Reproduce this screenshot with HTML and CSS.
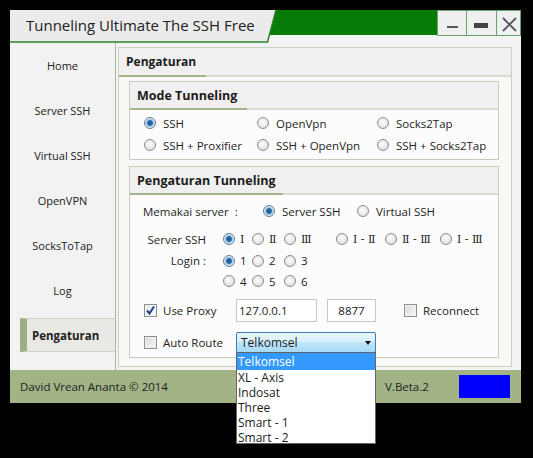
FILE: index.html
```html
<!DOCTYPE html>
<html lang="id">
<head>
  <title>Tunneling Ultimate The SSH Free</title>
  <meta charset="UTF-8"/>
  <link rel="stylesheet" href="styles.css">
</head>
<body>
<div class="window">
  <div class="titlebar">
    <svg class="title-art" width="511" height="33" viewBox="0 0 511 33">
      <polygon points="0,0 266,0 257.5,32 0,32" fill="#ebebeb"/>
      <polygon points="266,0 427,0 427,25 259.4,25" fill="#067c06"/>
      <polyline points="0,32 257.5,32 266,0" fill="none" stroke="#2a832a" stroke-width="1.5"/>
      <rect x="427.5" y="0.5" width="29" height="25" fill="#efefef" stroke="#6aa36a"/>
      <rect x="456.5" y="0.5" width="30" height="25" fill="#efefef" stroke="#6aa36a"/>
      <rect x="486.5" y="0.5" width="24" height="25" fill="#efefef" stroke="#6aa36a"/>
      <rect x="437" y="16" width="11" height="2" fill="#555"/>
      <rect x="464" y="13" width="14" height="5" fill="#444"/>
      <path d="M493 8 L506 21 M506 8 L493 21" stroke="#555" stroke-width="1.8" fill="none"/>
    </svg>
    <span class="title-text">Tunneling Ultimate The SSH Free</span>
  </div>

  <div class="main">
    <nav class="sidebar">
      <div class="nav-item">Home</div>
      <div class="nav-item">Server SSH</div>
      <div class="nav-item">Virtual SSH</div>
      <div class="nav-item">OpenVPN</div>
      <div class="nav-item">SocksToTap</div>
      <div class="nav-item">Log</div>
      <div class="nav-item active">Pengaturan</div>
    </nav>

    <div class="content">
      <div class="panel">
        <div class="panel-head"><span class="panel-title">Pengaturan</span></div>

        <div class="group">
          <div class="group-head"><span class="group-title mode-title">Mode Tunneling</span></div>
          <div class="mode-grid">
            <label class="opt"><span class="radio checked"></span>SSH</label>
            <label class="opt"><span class="radio"></span>OpenVpn</label>
            <label class="opt"><span class="radio"></span>Socks2Tap</label>
            <label class="opt"><span class="radio"></span>SSH + Proxifier</label>
            <label class="opt"><span class="radio"></span>SSH + OpenVpn</label>
            <label class="opt"><span class="radio"></span>SSH + Socks2Tap</label>
          </div>
        </div>

        <div class="group tunnel">
          <div class="group-head"><span class="group-title tunnel-title">Pengaturan Tunneling</span></div>
          <div class="tunnel-body">
            <div class="row row-server">
              <span class="server-label">Memakai server&nbsp; :</span>
              <label class="opt server-opt"><span class="radio checked"></span>Server SSH</label>
              <label class="opt"><span class="radio"></span>Virtual SSH</label>
            </div>

            <div class="row num-row">
              <span class="num-label">Server SSH</span>
              <div class="num-grid">
                <label class="num"><span class="radio checked"></span><span class="rn">Ⅰ</span></label>
                <label class="num"><span class="radio"></span><span class="rn">Ⅱ</span></label>
                <label class="num"><span class="radio"></span><span class="rn">Ⅲ</span></label>
                <label class="num"><span class="radio"></span><span class="rn">Ⅰ - Ⅱ</span></label>
                <label class="num"><span class="radio"></span><span class="rn">Ⅱ - Ⅲ</span></label>
                <label class="num"><span class="radio"></span><span class="rn">Ⅰ - Ⅲ</span></label>
              </div>
            </div>

            <div class="row num-row login">
              <span class="num-label">Login :</span>
              <div class="num-grid">
                <label class="num"><span class="radio checked"></span>1</label>
                <label class="num"><span class="radio"></span>2</label>
                <label class="num"><span class="radio"></span>3</label>
              </div>
            </div>

            <div class="row num-row login-2">
              <span class="num-label"></span>
              <div class="num-grid">
                <label class="num"><span class="radio"></span>4</label>
                <label class="num"><span class="radio"></span>5</label>
                <label class="num"><span class="radio"></span>6</label>
              </div>
            </div>

            <div class="row proxy-row">
              <label class="check-label"><span class="check checked">
                <svg width="11" height="11" viewBox="0 0 11 11"><path d="M2 5.5 L4.5 8.5 L9 1.5" fill="none" stroke="#23418c" stroke-width="2"/></svg>
              </span>Use Proxy</label>
              <input class="field ip" type="text" value="127.0.0.1">
              <input class="field port" type="text" value="8877">
              <label class="check-label reconnect"><span class="check"></span>Reconnect</label>
            </div>

            <div class="row route-row">
              <label class="check-label"><span class="check"></span>Auto Route</label>
              <div class="select">
                <span>Telkomsel</span>
                <span class="arrow"></span>
                <ul class="dropdown">
                  <li class="selected">Telkomsel</li>
                  <li>XL - Axis</li>
                  <li>Indosat</li>
                  <li>Three</li>
                  <li>Smart - 1</li>
                  <li>Smart - 2</li>
                </ul>
              </div>
            </div>
          </div>
        </div>
      </div>
    </div>
  </div>

  <div class="footer">
    <span class="author">David Vrean Ananta © 2014</span>
    <span class="version">V.Beta.2</span>
    <span class="status"></span>
  </div>
</div>
</body>
</html>
```

FILE: styles.css
```css
html {
  background: #000;
}

body {
  margin: 0;
  min-height: 458px;
  box-sizing: border-box;
  padding: 10px 12px 0 10px;
  background: #000;
  font-family: "Open Sans", "Noto Sans", sans-serif;
  font-size: 11.5px;
  color: #1c1c1c;
}

.window {
  width: 511px;
  height: 393px;
  background: #f3f3f3;
  display: grid;
  grid-template-rows: 33px 1fr 33px;
}

/* title bar */
.titlebar {
  display: grid;
}

.titlebar > * {
  grid-area: 1 / 1;
}

.title-text {
  font-size: 15px;
  line-height: 33px;
  padding-left: 16px;
  margin-top: -1px;
  color: #222;
}

.main {
  display: flex;
  min-height: 0;
}

/* sidebar */
.sidebar {
  width: 105px;
  border-right: 1px solid #a9b79c;
  background: #f2f2f2;
  display: flex;
  flex-direction: column;
  font-size: 11px;
}

.nav-item {
  height: 45px;
  flex-shrink: 0;
  display: flex;
  align-items: center;
  justify-content: center;
  color: #222;
}

.nav-item.active {
  box-sizing: border-box;
  height: 34px;
  margin: 5px 0 6px 10px;
  padding-left: 5px;
  justify-content: flex-start;
  border-left: 7px solid #9cae84;
  border-top: 1px solid #cfd2c8;
  border-bottom: 1px solid #cfd2c8;
  background: #e8e8e5;
  font-weight: bold;
  font-size: 11.5px;
}

/* content panel */
.content {
  flex: 1;
  display: flex;
  padding: 4px 9px 3px 2px;
}

.panel {
  flex: 1;
  border: 1px solid #c9cfc1;
  background: #f8f8f6;
  display: flex;
  flex-direction: column;
}

.panel-head {
  height: 27px;
  display: flex;
  background: #f0f0f0;
  border-bottom: 2px solid #d9dcd3;
}

.panel-title {
  width: 80px;
  padding-left: 7px;
  margin-bottom: -2px;
  display: flex;
  align-items: center;
  font-weight: bold;
  font-size: 12px;
  border-bottom: 2px solid #a3b38b;
}

.group {
  margin: 4px 12px 0 10px;
  border: 1px solid #c7ccbf;
  background: #fcfcfc;
}

.group.tunnel {
  margin-top: 6px;
}

.group-head {
  height: 26px;
  display: flex;
  background: #f0f0f0;
  border-bottom: 2px solid #d9dcd3;
}

.group-title {
  padding-left: 7px;
  margin-bottom: -2px;
  display: flex;
  align-items: center;
  font-weight: bold;
  font-size: 12.5px;
  border-bottom: 2px solid #a3b38b;
}

.mode-title {
  width: 110px;
}

.tunnel-title {
  width: 146px;
}

/* radios and checkboxes */
.radio {
  box-sizing: border-box;
  width: 12px;
  height: 12px;
  flex-shrink: 0;
  border: 1px solid #8c8c8c;
  border-radius: 50%;
  background: radial-gradient(circle at 45% 40%, #fdfdfd, #d6d6d6);
}

.radio.checked {
  border-color: #5c7e9c;
  background: radial-gradient(circle, #174d86 0, #2e74b0 2.5px, #a9c8e2 3.5px, #e9eef2 5px);
}

.check {
  box-sizing: border-box;
  width: 13px;
  height: 13px;
  flex-shrink: 0;
  border: 1px solid #8e8f8f;
  background: linear-gradient(135deg, #d8d8d8, #f8f8f8);
  box-shadow: inset 0 0 0 1px #f4f4f4;
  display: flex;
  align-items: center;
  justify-content: center;
}

.check.checked {
  background: linear-gradient(135deg, #e4e4e4, #fbfbfb);
}

.opt {
  display: flex;
  align-items: center;
  gap: 7px;
}

/* mode tunneling */
.mode-grid {
  display: grid;
  grid-template-columns: 113px 120px auto;
  grid-auto-rows: 22px;
  padding: 2px 0 3px 14px;
}

/* pengaturan tunneling */
.tunnel-body {
  padding: 5px 0 4px 13px;
  display: flex;
  flex-direction: column;
}

.row {
  display: flex;
  align-items: center;
}

.row-server {
  height: 22px;
}

.server-label {
  width: 120px;
}

.server-opt {
  width: 94px;
}

.num-row {
  height: 22px;
  margin-top: 6px;
}

.num-row.login {
  height: 21px;
  margin-top: 0;
}

.num-row.login-2 {
  height: 20px;
  margin-top: 0;
}

.num-label {
  width: 63px;
  margin-right: 17px;
  text-align: right;
}

.num-grid {
  display: grid;
  grid-template-columns: 29px 32px 52px 49px 55px auto;
}

.num {
  display: flex;
  align-items: center;
  gap: 5px;
}

.rn {
  font-family: "DejaVu Serif", "Liberation Serif", serif;
  font-size: 11px;
}

.proxy-row {
  height: 23px;
  margin-top: 8px;
}

.route-row {
  height: 21px;
  margin-top: 10px;
}

.check-label {
  width: 93px;
  padding-left: 1px;
  box-sizing: border-box;
  display: flex;
  align-items: center;
  gap: 6px;
}

.field {
  box-sizing: border-box;
  height: 23px;
  margin: 0;
  border: 1px solid #c3c6cb;
  background: #fff;
  font: inherit;
  color: #1c1c1c;
  padding: 0 2px;
}

.ip {
  width: 81px;
}

.port {
  width: 49px;
  margin-left: 10px;
  text-align: center;
}

.reconnect {
  margin-left: 27px;
}

.select {
  position: relative;
  box-sizing: border-box;
  width: 140px;
  height: 21px;
  padding-left: 4px;
  display: flex;
  align-items: center;
  border: 1px solid #3c7fb1;
  border-radius: 2px;
  background: linear-gradient(#eaf6fd, #d9f0fc 45%, #bee6fd 50%, #a7d9f5);
  font-size: 12px;
}

.arrow {
  margin-left: auto;
  margin-right: 4px;
  border-left: 3.5px solid transparent;
  border-right: 3.5px solid transparent;
  border-top: 4px solid #111;
}

.dropdown {
  position: absolute;
  top: 100%;
  left: -1px;
  width: 140px;
  height: 92px;
  box-sizing: border-box;
  margin: 0;
  padding: 0;
  list-style: none;
  border: 1px solid #646464;
  background: #fff;
  z-index: 2;
}

.dropdown li {
  height: 15px;
  line-height: 15px;
  padding-left: 1px;
}

.dropdown li.selected {
  height: 17px;
  line-height: 17px;
  background: #3399ff;
  color: #fff;
}

/* footer */
.footer {
  display: flex;
  align-items: center;
  padding: 0 11px 0 10px;
  background: #a2b386;
  font-size: 11.5px;
  color: #1e1e1e;
}

.author {
  flex: 1;
}

.version {
  width: 74px;
}

.status {
  width: 51px;
  height: 23px;
  background: #0000ff;
}
```
